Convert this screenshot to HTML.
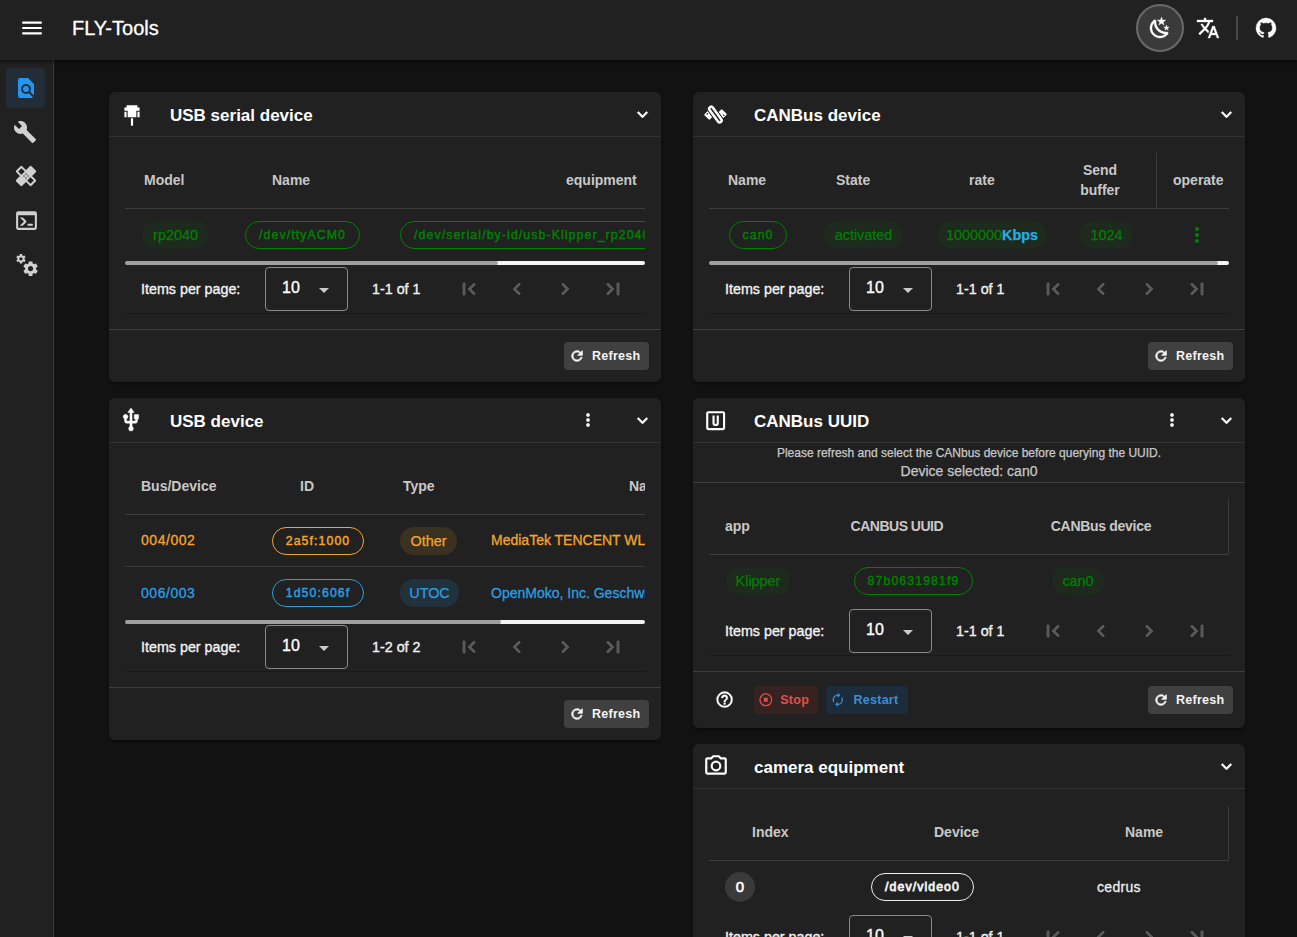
<!DOCTYPE html>
<html><head><meta charset="utf-8">
<style>
*{box-sizing:border-box;margin:0;padding:0}
html,body{width:1297px;height:937px;overflow:hidden;background:#121212;font-family:"Liberation Sans",sans-serif;color:#fff}
.a{position:absolute}
svg{display:block}
#bar{left:0;top:0;width:1297px;height:60px;background:#212121;box-shadow:0 2px 4px rgba(0,0,0,.5);z-index:2}
#side{left:0;top:60px;width:54px;height:877px;background:#212121;border-right:1px solid #3a3a3a}
.card{position:absolute;background:#212121;border-radius:6px;width:552px;box-shadow:0 2px 3px rgba(0,0,0,.35)}
.hd{position:absolute;left:0;top:0;width:552px;height:45px;border-bottom:1px solid #333}
.ttl{position:absolute;left:61px;top:12px;font-size:17px;font-weight:700;line-height:20px;white-space:nowrap}
.th{position:absolute;font-size:14px;font-weight:700;color:#c8c8c8;white-space:nowrap;line-height:16px}
.td{position:absolute;font-size:14px;white-space:nowrap;line-height:16px;letter-spacing:.3px;-webkit-text-stroke:0.3px currentColor}
.line{position:absolute;height:1px;background:#3e3e3e}
.chipo{position:absolute;height:28px;border:1px solid #008000;border-radius:14px;color:#008000;font-weight:400;letter-spacing:1.1px;font-size:12.3px;-webkit-text-stroke:0.45px currentColor;line-height:26px;text-align:center;white-space:nowrap;overflow:hidden}
.chipt{position:absolute;height:28px;border-radius:14px;background:rgba(0,128,0,.1);color:#008000;font-size:14.4px;line-height:28px;text-align:center;white-space:nowrap;-webkit-text-stroke:0.25px currentColor}
.sb{position:absolute;height:4px;border-radius:2px;background:#a0a0a0}
.ipp{position:absolute;font-size:14.3px;line-height:16px;color:#f2f2f2;white-space:nowrap;-webkit-text-stroke:0.35px #f2f2f2}
.sel{position:absolute;width:83px;height:44px;border:1px solid #8a8a8a;border-radius:4px}
.sel span{position:absolute;left:16px;top:11px;font-size:16px;line-height:18px;color:#fff;-webkit-text-stroke:0.35px #fff}
.sel svg{position:absolute;left:46px;top:10px}
.pag{position:absolute;font-size:14.3px;line-height:16px;color:#f2f2f2;white-space:nowrap;-webkit-text-stroke:0.35px #f2f2f2}
.nav{position:absolute}
.btn{position:absolute;height:28px;border-radius:4px;background:#404040;font-size:12.5px;font-weight:700;letter-spacing:.25px;line-height:28px;color:#f4f4f4;white-space:nowrap}
.btn svg{position:absolute;left:4px;top:5px}
.btn span{position:absolute;left:28px;top:-0.3px}
</style></head><body>

<!-- App bar -->
<div id="bar" class="a">
  <svg class="a" style="left:19px;top:15.2px" width="26" height="26" viewBox="0 0 24 24"><path fill="#fff" d="M3,6H21V8H3V6M3,11H21V13H3V11M3,16H21V18H3V16Z"/></svg>
  <div class="a" style="left:72px;top:17px;font-size:20px;line-height:22px;color:#fff;-webkit-text-stroke:0.3px #fff">FLY-Tools</div>
  <div class="a" style="left:1136px;top:4px;width:48px;height:48px;border-radius:50%;background:#3a3a3a;border:2px solid #6a6a6a"></div>
  <svg class="a" style="left:1148px;top:16px" width="24" height="24" viewBox="0 0 24 24"><path fill="#fff" stroke="#fff" stroke-width="0.35" d="M17.75,4.09L15.22,6.03L16.13,9.09L13.5,7.28L10.87,9.09L11.78,6.03L9.25,4.09L12.44,4L13.5,1L14.56,4L17.75,4.09M21.25,11L19.61,12.25L20.2,14.230L18.5,13.06L16.8,14.23L17.39,12.25L15.75,11L17.81,10.95L18.5,9L19.19,10.95L21.250,11M18.97,15.95C19.8,15.87 20.69,17.05 20.16,17.8C19.84,18.25 19.5,18.67 19.08,19.07C15.17,23 8.84,23 4.94,19.07C1.03,15.17 1.03,8.83 4.940,4.93C5.34,4.53 5.76,4.17 6.21,3.85C6.96,3.32 8.14,4.21 8.06,5.04C7.790,7.9 8.75,10.87 10.950,13.06C13.14,15.26 16.1,16.22 18.97,15.95M17.33,17.97C14.5,17.81 11.7,16.64 9.53,14.5C7.36,12.31 6.2,9.5 6.04,6.68C3.23,9.82 3.34,14.64 6.35,17.66C9.37,20.67 14.19,20.78 17.33,17.97Z"/></svg>
  <svg class="a" style="left:1196px;top:16px" width="24" height="24" viewBox="0 0 24 24"><path fill="#fff" stroke="#fff" stroke-width="0.35" d="M12.87,15.07L10.33,12.56L10.36,12.53C12.1,10.59 13.34,8.36 14.07,6H17V4H10V2H8V4H1V6H12.17C11.5,7.92 10.44,9.75 9,11.35C8.07,10.32 7.3,9.19 6.69,8H4.69C5.42,9.63 6.42,11.17 7.67,12.56L2.58,17.58L4,19L9,14L12.11,17.11L12.87,15.07M18.5,10H16.5L12,22H14L15.12,19H19.87L21,22H23L18.5,10M15.88,17L17.5,12.67L19.12,17H15.88Z"/></svg>
  <div class="a" style="left:1236px;top:16px;width:2px;height:24px;background:#4a4a4a"></div>
  <svg class="a" style="left:1254px;top:16px" width="24" height="24" viewBox="0 0 24 24"><path fill="#fff" stroke="#fff" stroke-width="0.35" d="M12,2A10,10 0 0,0 2,12C2,16.42 4.87,20.17 8.84,21.5C9.34,21.58 9.5,21.27 9.5,21C9.5,20.77 9.5,20.14 9.5,19.31C6.73,19.91 6.14,17.97 6.14,17.97C5.68,16.81 5.03,16.5 5.03,16.5C4.12,15.88 5.1,15.9 5.1,15.9C6.1,15.97 6.63,16.93 6.63,16.93C7.5,18.45 8.97,18 9.54,17.76C9.63,17.11 9.89,16.67 10.17,16.42C7.95,16.17 5.62,15.31 5.62,11.5C5.62,10.39 6,9.5 6.65,8.79C6.55,8.54 6.2,7.5 6.75,6.15C6.750,6.15 7.59,5.88 9.5,7.17C10.29,6.95 11.15,6.84 12,6.84C12.85,6.84 13.71,6.95 14.5,7.17C16.41,5.88 17.25,6.15 17.25,6.15C17.8,7.5 17.45,8.54 17.35,8.79C18,9.5 18.38,10.39 18.38,11.5C18.38,15.32 16.04,16.16 13.81,16.41C14.17,16.72 14.5,17.33 14.5,18.26C14.5,19.6 14.5,20.68 14.5,21.09C14.5,21.36 14.66,21.68 15.17,21.58C19.14,20.24 22,16.42 22,12A10,10 0 0,0 12,2Z"/></svg>
</div>

<!-- Side -->
<div id="side" class="a">
  <div class="a" style="left:6px;top:8px;width:39px;height:40px;border-radius:4px;background:#222d37"></div>
  <svg class="a" style="left:14px;top:15.8px" width="24" height="24" viewBox="0 0 24 24"><path fill="#2196f3" d="M9,13A3,3 0 0,0 12,16A3,3 0 0,0 15,13A3,3 0 0,0 12,10A3,3 0 0,0 9,13M20,19.59V8L14,2H6A2,2 0 0,0 4,4V20A2,2 0 0,0 6,22H18C18.45,22 18.85,21.85 19.19,21.6L14.76,17.17C13.960,17.69 13,18 12,18A5,5 0 0,1 7,13A5,5 0 0,1 12,8A5,5 0 0,1 17,13C17,14 16.69,14.96 16.17,15.77L20,19.59Z"/></svg>
  <svg class="a" style="left:13.3px;top:60.3px" width="24" height="24" viewBox="0 0 24 24"><path fill="#d0d0d0" d="M22.7,19L13.6,9.9C14.5,7.6 14,4.9 12.1,3C10.1,1 7.1,0.6 4.7,1.7L9,6L6,9L1.6,4.7C0.4,7.1 0.9,10.1 2.9,12.1C4.8,14 7.5,14.5 9.8,13.6L18.9,22.7C19.3,23.1 19.9,23.1 20.3,22.7L22.6,20.4C23.1,20 23.1,19.3 22.7,19Z"/></svg>
  <svg class="a" style="left:13.8px;top:103.9px" width="24" height="24" viewBox="0 0 24 24"><g transform="rotate(45 12 12)"><rect x="1.2" y="7.75" width="21.6" height="8.5" rx="1.2" fill="#d0d0d0"/><rect x="7.75" y="1.2" width="8.5" height="21.6" rx="1.2" fill="#d0d0d0"/><rect x="3.3" y="9.7" width="4.6" height="4.6" fill="#212121"/><rect x="16.1" y="9.7" width="4.6" height="4.6" fill="#212121"/></g><g fill="#555"><rect x="11.3" y="9.3" width="1.4" height="1.4"/><rect x="11.3" y="13.3" width="1.4" height="1.4"/><rect x="9.3" y="11.3" width="1.4" height="1.4"/><rect x="13.3" y="11.3" width="1.4" height="1.4"/></g></svg>
  <svg class="a" style="left:13.5px;top:147.5px" width="25" height="25" viewBox="0 0 24 24"><path fill="#d0d0d0" d="M20,19V7H4V19H20M20,3A2,2 0 0,1 22,5V19A2,2 0 0,1 20,21H4A2,2 0 0,1 2,19V5C2,3.89 2.9,3 4,3H20M13,17V15H18V17H13M9.58,13L5.57,9H8.4L11.7,12.3C12.09,12.69 12.09,13.33 11.7,13.72L8.42,17H5.59L9.58,13Z"/></svg>
  <svg class="a" style="left:13.5px;top:191.5px" width="25" height="25" viewBox="0 0 24 24"><path fill="#d0d0d0" d="M15.9,18.45C17.25,18.45 18.35,17.35 18.35,16C18.35,14.65 17.25,13.55 15.9,13.55C14.54,13.55 13.45,14.65 13.45,16C13.45,17.35 14.54,18.45 15.9,18.45M21.1,16.68L22.58,17.84C22.71,17.95 22.75,18.13 22.66,18.29L21.26,20.71C21.17,20.86 21,20.92 20.83,20.86L19.09,20.16C18.73,20.44 18.33,20.67 17.91,20.85L17.64,22.7C17.62,22.87 17.47,23 17.3,23H14.5C14.32,23 14.18,22.87 14.15,22.7L13.89,20.85C13.46,20.67 13.07,20.44 12.71,20.16L10.96,20.86C10.81,20.92 10.62,20.86 10.54,20.71L9.14,18.29C9.05,18.13 9.09,17.95 9.22,17.84L10.7,16.68L10.65,16L10.7,15.31L9.22,14.16C9.09,14.05 9.05,13.86 9.14,13.71L10.54,11.29C10.62,11.13 10.81,11.07 10.96,11.13L12.71,11.84C13.07,11.56 13.46,11.32 13.89,11.15L14.15,9.29C14.18,9.13 14.320,9 14.5,9H17.3C17.47,9 17.62,9.13 17.64,9.29L17.91,11.15C18.33,11.32 18.73,11.56 19.09,11.84L20.83,11.13C21,11.07 21.17,11.13 21.26,11.29L22.66,13.71C22.75,13.86 22.71,14.05 22.58,14.16L21.1,15.31L21.15,16L21.1,16.68M6.69,8.07C7.56,8.07 8.26,7.37 8.26,6.5C8.26,5.63 7.56,4.92 6.69,4.92A1.580,1.58 0 0,0 5.11,6.5C5.11,7.37 5.82,8.07 6.69,8.07M10.03,6.94L11,7.68C11.07,7.75 11.09,7.87 11.03,7.97L10.13,9.53C10.08,9.63 9.96,9.67 9.86,9.63L8.74,9.18L8,9.62L7.81,10.81C7.79,10.92 7.7,11 7.59,11H5.79C5.67,11 5.58,10.92 5.56,10.81L5.4,9.62L4.64,9.18L3.5,9.63C3.41,9.67 3.3,9.63 3.24,9.53L2.34,7.97C2.28,7.87 2.31,7.75 2.39,7.68L3.34,6.94L3.31,6.5L3.34,6.06L2.39,5.32C2.31,5.25 2.28,5.13 2.34,5.03L3.24,3.47C3.3,3.37 3.41,3.33 3.5,3.37L4.63,3.82L5.4,3.38L5.56,2.19C5.58,2.08 5.67,2 5.79,2H7.59C7.7,2 7.79,2.08 7.81,2.19L8,3.38L8.74,3.82L9.86,3.37C9.96,3.33 10.08,3.37 10.13,3.47L11.03,5.03C11.09,5.13 11.07,5.25 11,5.32L10.03,6.06L10.06,6.5L10.03,6.94Z"/></svg>
</div>

<!-- CARDS -->
<div class="card" id="c1" style="left:109px;top:92px;height:290px">
  <div class="hd"></div>
  <svg class="a" style="left:9.5px;top:9.5px" width="26" height="26" viewBox="0 0 24 24"><path fill="#fff" d="M7,3H17V5H19V8H16V14H8V8H5V5H7V3M17,9H19V14H17V9M11,15H13V22H11V15M5,9H7V14H5V9Z"/></svg>
  <div class="ttl" style="top:13.5px">USB serial device</div>
  <svg class="a" style="left:523px;top:11.5px" width="21" height="21" viewBox="0 0 24 24"><path fill="#fff" stroke="#fff" stroke-width="0.6" d="M7.41,8.58L12,13.17L16.59,8.58L18,10L12,16L6,10L7.41,8.58Z"/></svg>
  <div class="th" style="left:35px;top:80px">Model</div>
  <div class="th" style="left:163px;top:80px">Name</div>
  <div class="th" style="left:457px;top:80px">equipment</div>
  <div class="line" style="left:16px;top:116px;width:520px"></div>
  <div class="a" style="left:16px;top:117px;width:520px;height:52px;overflow:hidden">
    <div class="chipt" style="left:17px;top:12px;width:67px">rp2040</div>
    <div class="chipo" style="left:120px;top:12px;width:115px">/dev/ttyACM0</div>
    <div class="chipo" style="left:275px;top:12px;width:300px;text-align:left;padding-left:13px">/dev/serial/by-id/usb-Klipper_rp2040_E6</div>
  </div>
  <div class="sb" style="left:386px;top:169px;width:150px;background:#f4f4f4"></div>
  <div class="sb" style="left:16px;top:169px;width:373px"></div>
  <div class="ipp" style="left:32px;top:189px">Items per page:</div>
  <div class="sel" style="left:156px;top:175px"><span>10</span><svg width="24" height="24" viewBox="0 0 24 24"><path fill="#ccc" d="M7,10L12,15L17,10H7Z"/></svg></div>
  <div class="pag" style="left:263px;top:189px">1-1 of 1</div>
  <svg class="nav" style="left:348px;top:185px" width="24" height="24" viewBox="0 0 24 24"><path fill="#5a5a5a" stroke="#5a5a5a" stroke-width="0.9" d="M18.41,16.59L13.82,12L18.41,7.41L17,6L11,12L17,18L18.41,16.59M6,6H8V18H6V6Z"/></svg>
  <svg class="nav" style="left:396px;top:185px" width="24" height="24" viewBox="0 0 24 24"><path fill="#5a5a5a" stroke="#5a5a5a" stroke-width="0.9" d="M15.41,16.58L10.83,12L15.41,7.41L14,6L8,12L14,18L15.41,16.58Z"/></svg>
  <svg class="nav" style="left:444px;top:185px" width="24" height="24" viewBox="0 0 24 24"><path fill="#5a5a5a" stroke="#5a5a5a" stroke-width="0.9" d="M8.59,16.58L13.17,12L8.59,7.41L10,6L16,12L10,18L8.59,16.58Z"/></svg>
  <svg class="nav" style="left:492px;top:185px" width="24" height="24" viewBox="0 0 24 24"><path fill="#5a5a5a" stroke="#5a5a5a" stroke-width="0.9" d="M5.59,7.41L10.18,12L5.59,16.59L7,18L13,12L7,6L5.59,7.41M16,6H18V18H16V6Z"/></svg>
  <div class="line" style="left:16px;top:221px;width:520px;background:#181818"></div>
  <div class="line" style="left:0;top:237px;width:552px"></div>
  <div class="btn" style="left:455px;top:250px;width:85px"><svg width="16" height="16" viewBox="0 0 24 24" style="left:4.8px;top:5.8px"><path fill="#f4f4f4" stroke="#f4f4f4" stroke-width="1.1" d="M17.65,6.35C16.2,4.9 14.21,4 12,4A8,8 0 0,0 4,12A8,8 0 0,0 12,20C15.73,20 18.84,17.45 19.73,14H17.65C16.83,16.33 14.61,18 12,18A6,6 0 0,1 6,12A6,6 0 0,1 12,6C13.66,6 15.14,6.69 16.22,7.78L13,11H20V4L17.65,6.35Z"/></svg><span>Refresh</span></div>
</div>
<div class="card" id="c2" style="left:693px;top:92px;height:290px">
  <div class="hd"></div>
  <svg class="a" style="left:0;top:0" width="44" height="44" viewBox="0 0 44 44"><g transform="translate(15.6,23.4) rotate(-45)"><rect x="-2.8" y="-3.8" width="5.6" height="7.6" rx="1" fill="#fff"/></g><g transform="translate(29.4,21.6) rotate(-45)"><rect x="-2.8" y="-3.8" width="5.6" height="7.6" rx="1" fill="#fff"/></g><g transform="translate(22.4,22.6) rotate(-36)"><rect x="-2" y="-9.2" width="4" height="18.4" rx="2" fill="none" stroke="#212121" stroke-width="4.4"/><rect x="-2" y="-9.2" width="4" height="18.4" rx="2" fill="none" stroke="#fff" stroke-width="2.5"/></g><circle cx="14.3" cy="21.9" r="0.8" fill="#212121"/><circle cx="30.7" cy="23.2" r="0.8" fill="#212121"/></svg>
  <div class="ttl" style="top:13.5px">CANBus device</div>
  <svg class="a" style="left:523px;top:11.5px" width="21" height="21" viewBox="0 0 24 24"><path fill="#fff" stroke="#fff" stroke-width="0.6" d="M7.41,8.58L12,13.17L16.59,8.58L18,10L12,16L6,10L7.41,8.58Z"/></svg>
  <div class="th" style="left:35px;top:80px">Name</div>
  <div class="th" style="left:143px;top:80px">State</div>
  <div class="th" style="left:276px;top:80px">rate</div>
  <div class="th" style="left:386px;top:67.5px;text-align:center;width:42px;line-height:20.5px">Send<br>buffer</div>
  <div class="a" style="left:463px;top:61px;width:1px;height:55px;background:#3a3a3a"></div>
  <div class="th" style="left:480px;top:80px">operate</div>
  <div class="line" style="left:16px;top:116px;width:520px"></div>
  <div class="a" style="left:16px;top:117px;width:520px;height:52px;overflow:hidden">
    <div class="chipo" style="left:20px;top:12px;width:58px">can0</div>
    <div class="chipt" style="left:115px;top:12px;width:79px">activated</div>
    <div class="chipt" style="left:228px;top:12px;width:110px">1000000<b style="color:#25aee0">Kbps</b></div>
    <div class="chipt" style="left:371px;top:12px;width:53px">1024</div>
    <svg class="a" style="left:476px;top:14px" width="24" height="24" viewBox="0 0 24 24"><path fill="#008000" d="M12,16A2,2 0 0,1 14,18A2,2 0 0,1 12,20A2,2 0 0,1 10,18A2,2 0 0,1 12,16M12,10A2,2 0 0,1 14,12A2,2 0 0,1 12,14A2,2 0 0,1 10,12A2,2 0 0,1 12,10M12,4A2,2 0 0,1 14,6A2,2 0 0,1 12,8A2,2 0 0,1 10,6A2,2 0 0,1 12,4Z"/></svg>
  </div>
  <div class="sb" style="left:522px;top:169px;width:14px;background:#f4f4f4"></div>
  <div class="sb" style="left:16px;top:169px;width:509px"></div>
  <div class="ipp" style="left:32px;top:189px">Items per page:</div>
  <div class="sel" style="left:156px;top:175px"><span>10</span><svg width="24" height="24" viewBox="0 0 24 24"><path fill="#ccc" d="M7,10L12,15L17,10H7Z"/></svg></div>
  <div class="pag" style="left:263px;top:189px">1-1 of 1</div>
  <svg class="nav" style="left:348px;top:185px" width="24" height="24" viewBox="0 0 24 24"><path fill="#5a5a5a" stroke="#5a5a5a" stroke-width="0.9" d="M18.41,16.59L13.82,12L18.41,7.41L17,6L11,12L17,18L18.41,16.59M6,6H8V18H6V6Z"/></svg>
  <svg class="nav" style="left:396px;top:185px" width="24" height="24" viewBox="0 0 24 24"><path fill="#5a5a5a" stroke="#5a5a5a" stroke-width="0.9" d="M15.41,16.58L10.83,12L15.41,7.41L14,6L8,12L14,18L15.41,16.58Z"/></svg>
  <svg class="nav" style="left:444px;top:185px" width="24" height="24" viewBox="0 0 24 24"><path fill="#5a5a5a" stroke="#5a5a5a" stroke-width="0.9" d="M8.59,16.58L13.17,12L8.59,7.41L10,6L16,12L10,18L8.59,16.58Z"/></svg>
  <svg class="nav" style="left:492px;top:185px" width="24" height="24" viewBox="0 0 24 24"><path fill="#5a5a5a" stroke="#5a5a5a" stroke-width="0.9" d="M5.59,7.41L10.18,12L5.59,16.59L7,18L13,12L7,6L5.59,7.41M16,6H18V18H16V6Z"/></svg>
  <div class="line" style="left:16px;top:221px;width:520px;background:#181818"></div>
  <div class="line" style="left:0;top:237px;width:552px"></div>
  <div class="btn" style="left:455px;top:250px;width:85px"><svg width="16" height="16" viewBox="0 0 24 24" style="left:4.8px;top:5.8px"><path fill="#f4f4f4" stroke="#f4f4f4" stroke-width="1.1" d="M17.65,6.35C16.2,4.9 14.21,4 12,4A8,8 0 0,0 4,12A8,8 0 0,0 12,20C15.73,20 18.84,17.45 19.73,14H17.65C16.83,16.33 14.61,18 12,18A6,6 0 0,1 6,12A6,6 0 0,1 12,6C13.66,6 15.14,6.69 16.22,7.78L13,11H20V4L17.65,6.35Z"/></svg><span>Refresh</span></div>
</div>
<div class="card" id="c3" style="left:109px;top:398px;height:342px">
  <div class="hd"></div>
  <svg class="a" style="left:9.2px;top:9.2px" width="26" height="26" viewBox="0 0 24 24"><path fill="#fff" stroke="#fff" stroke-width="0.4" d="M15,7V11H16V13H13V5H15L12,1L9,5H11V13H8V10.93C8.7,10.56 9.2,9.85 9.2,9C9.2,7.78 8.21,6.8 7,6.8C5.78,6.8 4.8,7.78 4.8,9C4.8,9.85 5.3,10.56 6,10.93V13A2,2 0 0,0 8,15H11V18.05C10.29,18.41 9.8,19.15 9.8,20A2.2,2.2 0 0,0 12,22.2A2.2,2.2 0 0,0 14.2,20C14.2,19.15 13.710,18.41 13,18.05V15H16A2,2 0 0,0 18,13V11H19V7H15Z"/></svg>
  <div class="ttl" style="top:13.5px">USB device</div>
  <svg class="a" style="left:469px;top:12px" width="20" height="20" viewBox="0 0 24 24"><path fill="#fff" stroke="#fff" stroke-width="0.5" d="M12,16A2,2 0 0,1 14,18A2,2 0 0,1 12,20A2,2 0 0,1 10,18A2,2 0 0,1 12,16M12,10A2,2 0 0,1 14,12A2,2 0 0,1 12,14A2,2 0 0,1 10,12A2,2 0 0,1 12,10M12,4A2,2 0 0,1 14,6A2,2 0 0,1 12,8A2,2 0 0,1 10,6A2,2 0 0,1 12,4Z"/></svg>
  <svg class="a" style="left:523px;top:11.5px" width="21" height="21" viewBox="0 0 24 24"><path fill="#fff" stroke="#fff" stroke-width="0.6" d="M7.41,8.58L12,13.17L16.59,8.58L18,10L12,16L6,10L7.41,8.58Z"/></svg>
  <div class="th" style="left:32px;top:80px">Bus/Device</div>
  <div class="th" style="left:191px;top:80px">ID</div>
  <div class="th" style="left:294px;top:80px">Type</div>
  <div class="a" style="left:16px;top:60px;width:520px;height:173px;overflow:hidden">
    <div class="th" style="left:504px;top:20px">Name</div>
    <div class="line" style="left:0;top:56px;width:520px"></div>
    <div class="td" style="left:16px;top:73.8px;color:#f2a52e;letter-spacing:.55px">004/002</div>
    <div class="chipo" style="left:147px;top:69px;width:92px;border-color:#f2a52e;color:#f2a52e">2a5f:1000</div>
    <div class="chipt" style="left:275px;top:69px;width:57px;background:rgba(245,166,35,.12);color:#f2a52e">Other</div>
    <div class="td" style="left:366px;top:73.5px;color:#f2a52e;letter-spacing:0">MediaTek TENCENT WLAN</div>
    <div class="line" style="left:0;top:108px;width:520px;background:#3a3a3a"></div>
    <div class="td" style="left:16px;top:126.8px;color:#2a9ee0;letter-spacing:.55px">006/003</div>
    <div class="chipo" style="left:147px;top:121px;width:92px;border-color:#2a9ee0;color:#2a9ee0">1d50:606f</div>
    <div class="chipt" style="left:275px;top:121px;width:59px;background:rgba(42,158,224,.14);color:#2a9ee0">UTOC</div>
    <div class="td" style="left:366px;top:126.8px;color:#2a9ee0;letter-spacing:0">OpenMoko, Inc. Geschwister</div>
  </div>
  <div class="sb" style="left:389px;top:222px;width:147px;background:#f4f4f4"></div>
  <div class="sb" style="left:16px;top:222px;width:376px"></div>
  <div class="ipp" style="left:32px;top:241px">Items per page:</div>
  <div class="sel" style="left:156px;top:227px"><span>10</span><svg width="24" height="24" viewBox="0 0 24 24"><path fill="#ccc" d="M7,10L12,15L17,10H7Z"/></svg></div>
  <div class="pag" style="left:263px;top:241px">1-2 of 2</div>
  <svg class="nav" style="left:348px;top:237px" width="24" height="24" viewBox="0 0 24 24"><path fill="#5a5a5a" stroke="#5a5a5a" stroke-width="0.9" d="M18.41,16.59L13.82,12L18.41,7.41L17,6L11,12L17,18L18.41,16.59M6,6H8V18H6V6Z"/></svg>
  <svg class="nav" style="left:396px;top:237px" width="24" height="24" viewBox="0 0 24 24"><path fill="#5a5a5a" stroke="#5a5a5a" stroke-width="0.9" d="M15.41,16.58L10.83,12L15.41,7.41L14,6L8,12L14,18L15.41,16.58Z"/></svg>
  <svg class="nav" style="left:444px;top:237px" width="24" height="24" viewBox="0 0 24 24"><path fill="#5a5a5a" stroke="#5a5a5a" stroke-width="0.9" d="M8.59,16.58L13.17,12L8.59,7.41L10,6L16,12L10,18L8.59,16.58Z"/></svg>
  <svg class="nav" style="left:492px;top:237px" width="24" height="24" viewBox="0 0 24 24"><path fill="#5a5a5a" stroke="#5a5a5a" stroke-width="0.9" d="M5.59,7.41L10.18,12L5.59,16.59L7,18L13,12L7,6L5.59,7.41M16,6H18V18H16V6Z"/></svg>
  <div class="line" style="left:16px;top:273px;width:520px;background:#181818"></div>
  <div class="line" style="left:0;top:289px;width:552px"></div>
  <div class="btn" style="left:455px;top:302px;width:85px"><svg width="16" height="16" viewBox="0 0 24 24" style="left:4.8px;top:5.8px"><path fill="#f4f4f4" stroke="#f4f4f4" stroke-width="1.1" d="M17.65,6.35C16.2,4.9 14.21,4 12,4A8,8 0 0,0 4,12A8,8 0 0,0 12,20C15.73,20 18.84,17.45 19.73,14H17.65C16.83,16.33 14.61,18 12,18A6,6 0 0,1 6,12A6,6 0 0,1 12,6C13.66,6 15.14,6.69 16.22,7.78L13,11H20V4L17.65,6.35Z"/></svg><span>Refresh</span></div>
</div>
<div class="card" id="c4" style="left:693px;top:398px;height:330px">
  <div class="hd"></div>
  <svg class="a" style="left:9.7px;top:10px" width="25.3" height="25.3" viewBox="0 0 24 24"><path fill="#fff" d="M9,7H11V15H13V7H15V15A2,2 0 0,1 13,17H11A2,2 0 0,1 9,15V7M5,3H19A2,2 0 0,1 21,5V19A2,2 0 0,1 19,21H5A2,2 0 0,1 3,19V5A2,2 0 0,1 5,3M5,5V19H19V5H5Z"/></svg>
  <div class="ttl" style="top:13.5px">CANBus UUID</div>
  <svg class="a" style="left:469px;top:12px" width="20" height="20" viewBox="0 0 24 24"><path fill="#fff" stroke="#fff" stroke-width="0.5" d="M12,16A2,2 0 0,1 14,18A2,2 0 0,1 12,20A2,2 0 0,1 10,18A2,2 0 0,1 12,16M12,10A2,2 0 0,1 14,12A2,2 0 0,1 12,14A2,2 0 0,1 10,12A2,2 0 0,1 12,10M12,4A2,2 0 0,1 14,6A2,2 0 0,1 12,8A2,2 0 0,1 10,6A2,2 0 0,1 12,4Z"/></svg>
  <svg class="a" style="left:523px;top:11.5px" width="21" height="21" viewBox="0 0 24 24"><path fill="#fff" stroke="#fff" stroke-width="0.6" d="M7.41,8.58L12,13.17L16.59,8.58L18,10L12,16L6,10L7.41,8.58Z"/></svg>
  <div class="a" style="left:0;top:47.5px;width:552px;text-align:center;font-size:12px;line-height:14px;color:#c8c8c8;white-space:nowrap;-webkit-text-stroke:0.25px #c8c8c8">Please refresh and select the CANbus device before querying the UUID.</div>
  <div class="a" style="left:0;top:64px;width:552px;text-align:center;font-size:14px;line-height:18px;color:#c8c8c8;white-space:nowrap;-webkit-text-stroke:0.25px #c8c8c8">Device selected: can0</div>
  <div class="line" style="left:0;top:84px;width:552px"></div>
  <div class="th" style="left:32px;top:120px">app</div>
  <div class="th" style="left:157.6px;top:120px;letter-spacing:-0.5px">CANBUS UUID</div>
  <div class="th" style="left:357.8px;top:120px;letter-spacing:-0.3px">CANBus device</div>
  <div class="a" style="left:535px;top:101px;width:1px;height:55px;background:#3a3a3a"></div>
  <div class="line" style="left:16px;top:156px;width:520px"></div>
  <div class="chipt" style="left:33px;top:169px;width:64px">Klipper</div>
  <div class="chipo" style="left:161px;top:169px;width:119px">87b0631981f9</div>
  <div class="chipt" style="left:359px;top:169px;width:52px">can0</div>
  <div class="ipp" style="left:32px;top:225px">Items per page:</div>
  <div class="sel" style="left:156px;top:211px"><span>10</span><svg width="24" height="24" viewBox="0 0 24 24"><path fill="#ccc" d="M7,10L12,15L17,10H7Z"/></svg></div>
  <div class="pag" style="left:263px;top:225px">1-1 of 1</div>
  <svg class="nav" style="left:348px;top:221px" width="24" height="24" viewBox="0 0 24 24"><path fill="#5a5a5a" stroke="#5a5a5a" stroke-width="0.9" d="M18.41,16.59L13.82,12L18.41,7.41L17,6L11,12L17,18L18.41,16.59M6,6H8V18H6V6Z"/></svg>
  <svg class="nav" style="left:396px;top:221px" width="24" height="24" viewBox="0 0 24 24"><path fill="#5a5a5a" stroke="#5a5a5a" stroke-width="0.9" d="M15.41,16.58L10.83,12L15.41,7.41L14,6L8,12L14,18L15.41,16.58Z"/></svg>
  <svg class="nav" style="left:444px;top:221px" width="24" height="24" viewBox="0 0 24 24"><path fill="#5a5a5a" stroke="#5a5a5a" stroke-width="0.9" d="M8.59,16.58L13.17,12L8.59,7.41L10,6L16,12L10,18L8.59,16.58Z"/></svg>
  <svg class="nav" style="left:492px;top:221px" width="24" height="24" viewBox="0 0 24 24"><path fill="#5a5a5a" stroke="#5a5a5a" stroke-width="0.9" d="M5.59,7.41L10.18,12L5.59,16.59L7,18L13,12L7,6L5.59,7.41M16,6H18V18H16V6Z"/></svg>
  <div class="line" style="left:16px;top:257px;width:520px;background:#181818"></div>
  <div class="line" style="left:0;top:273px;width:552px"></div>
  <svg class="a" style="left:22.2px;top:292.3px" width="19.2" height="19.2" viewBox="0 0 24 24"><path fill="#fff" stroke="#fff" stroke-width="0.5" d="M11,18H13V16H11V18M12,2A10,10 0 0,0 2,12A10,10 0 0,0 12,22A10,10 0 0,0 22,12A10,10 0 0,0 12,2M12,20C7.59,20 4,16.410 4,12C4,7.59 7.59,4 12,4C16.41,4 20,7.59 20,12C20,16.41 16.41,20 12,20M12,6A4,4 0 0,0 8,10H10A2,2 0 0,1 12,8A2,2 0 0,1 14,10C14,12 11,11.75 11,15H13C13,12.75 16,12.5 16,10A4,4 0 0,0 12,6Z"/></svg>
  <div class="btn" style="left:60.6px;top:288px;width:64px;height:27.6px;background:#372222;color:#e0504a;line-height:27.6px"><svg style="left:4.3px;top:5.8px" width="15.6" height="15.6" viewBox="0 0 24 24"><path fill="#e0504a" d="M12,2A10,10 0 0,0 2,12A10,10 0 0,0 12,22A10,10 0 0,0 22,12A10,10 0 0,0 12,2M12,4C16.41,4 20,7.59 20,12C20,16.41 16.41,20 12,20C7.59,20 4,16.41 4,12C4,7.59 7.59,4 12,4M9,9V15H15V9"/></svg><span style="left:26.7px;top:0.8px">Stop</span></div>
  <div class="btn" style="left:133.4px;top:288px;width:81.3px;height:27.6px;background:#1d2c3a;color:#3a8fd6;line-height:27.6px"><svg style="left:3.6px;top:5.8px" width="15.6" height="15.6" viewBox="0 0 24 24"><path fill="#3a8fd6" d="M12,6V9L16,5L12,1V4A8,8 0 0,0 4,12C4,13.57 4.46,15.03 5.24,16.26L6.7,14.8C6.25,13.97 6,13 6,12A6,6 0 0,1 12,6M18.76,7.74L17.3,9.2C17.74,10.04 18,11 18,12A6,6 0 0,1 12,18V15L8,19L12,23V20A8,8 0 0,0 20,12C20,10.43 19.54,8.97 18.76,7.74Z"/></svg><span style="left:27.2px;top:0.8px">Restart</span></div>
  <div class="btn" style="left:455px;top:288px;width:85px"><svg width="16" height="16" viewBox="0 0 24 24" style="left:4.8px;top:5.8px"><path fill="#f4f4f4" stroke="#f4f4f4" stroke-width="1.1" d="M17.65,6.35C16.2,4.9 14.21,4 12,4A8,8 0 0,0 4,12A8,8 0 0,0 12,20C15.73,20 18.84,17.45 19.73,14H17.65C16.83,16.33 14.61,18 12,18A6,6 0 0,1 6,12A6,6 0 0,1 12,6C13.66,6 15.14,6.69 16.22,7.78L13,11H20V4L17.65,6.35Z"/></svg><span>Refresh</span></div>
</div>
<div class="card" id="c5" style="left:693px;top:744px;height:300px">
  <div class="hd"></div>
  <svg class="a" style="left:10px;top:9px" width="26" height="26" viewBox="0 0 24 24"><path fill="#fff" d="M20,4H16.83L15,2H9L7.17,4H4A2,2 0 0,0 2,6V18A2,2 0 0,0 4,20H20A2,2 0 0,0 22,18V6A2,2 0 0,0 20,4M20,18H4V6H8.05L9.88,4H14.12L15.95,6H20V18M12,7A5,5 0 0,0 7,12A5,5 0 0,0 12,17A5,5 0 0,0 17,12A5,5 0 0,0 12,7M12,15A3,3 0 0,1 9,12A3,3 0 0,1 12,9A3,3 0 0,1 15,12A3,3 0 0,1 12,15Z"/></svg>
  <div class="ttl" style="top:13.5px">camera equipment</div>
  <svg class="a" style="left:523px;top:11.5px" width="21" height="21" viewBox="0 0 24 24"><path fill="#fff" stroke="#fff" stroke-width="0.6" d="M7.41,8.58L12,13.17L16.59,8.58L18,10L12,16L6,10L7.41,8.58Z"/></svg>
  <div class="th" style="left:59px;top:80px">Index</div>
  <div class="th" style="left:241px;top:80px">Device</div>
  <div class="th" style="left:432px;top:80px">Name</div>
  <div class="a" style="left:535px;top:62px;width:1px;height:55px;background:#3a3a3a"></div>
  <div class="line" style="left:16px;top:116px;width:520px"></div>
  <div class="a" style="left:32px;top:128px;width:30px;height:30px;border-radius:50%;background:#3a3a3a;font-size:15px;font-weight:400;-webkit-text-stroke:0.6px #fff;line-height:30px;text-align:center">0</div>
  <div class="chipo" style="left:178px;top:129px;width:103px;border-color:#eee;color:#f0f0f0;-webkit-text-stroke:0.8px #f0f0f0">/dev/video0</div>
  <div class="td" style="left:404px;top:135px;color:#eee">cedrus</div>
  <div class="ipp" style="left:32px;top:185px">Items per page:</div>
  <div class="sel" style="left:156px;top:171px"><span>10</span><svg width="24" height="24" viewBox="0 0 24 24"><path fill="#ccc" d="M7,10L12,15L17,10H7Z"/></svg></div>
  <div class="pag" style="left:263px;top:185px">1-1 of 1</div>
  <svg class="nav" style="left:348px;top:181px" width="24" height="24" viewBox="0 0 24 24"><path fill="#5a5a5a" stroke="#5a5a5a" stroke-width="0.9" d="M18.41,16.59L13.82,12L18.41,7.41L17,6L11,12L17,18L18.41,16.59M6,6H8V18H6V6Z"/></svg>
  <svg class="nav" style="left:396px;top:181px" width="24" height="24" viewBox="0 0 24 24"><path fill="#5a5a5a" stroke="#5a5a5a" stroke-width="0.9" d="M15.41,16.58L10.83,12L15.41,7.41L14,6L8,12L14,18L15.41,16.58Z"/></svg>
  <svg class="nav" style="left:444px;top:181px" width="24" height="24" viewBox="0 0 24 24"><path fill="#5a5a5a" stroke="#5a5a5a" stroke-width="0.9" d="M8.59,16.58L13.17,12L8.59,7.41L10,6L16,12L10,18L8.59,16.58Z"/></svg>
  <svg class="nav" style="left:492px;top:181px" width="24" height="24" viewBox="0 0 24 24"><path fill="#5a5a5a" stroke="#5a5a5a" stroke-width="0.9" d="M5.59,7.41L10.18,12L5.59,16.59L7,18L13,12L7,6L5.59,7.41M16,6H18V18H16V6Z"/></svg>
  <div class="line" style="left:16px;top:217px;width:520px;background:#181818"></div>
</div>

</body></html>
